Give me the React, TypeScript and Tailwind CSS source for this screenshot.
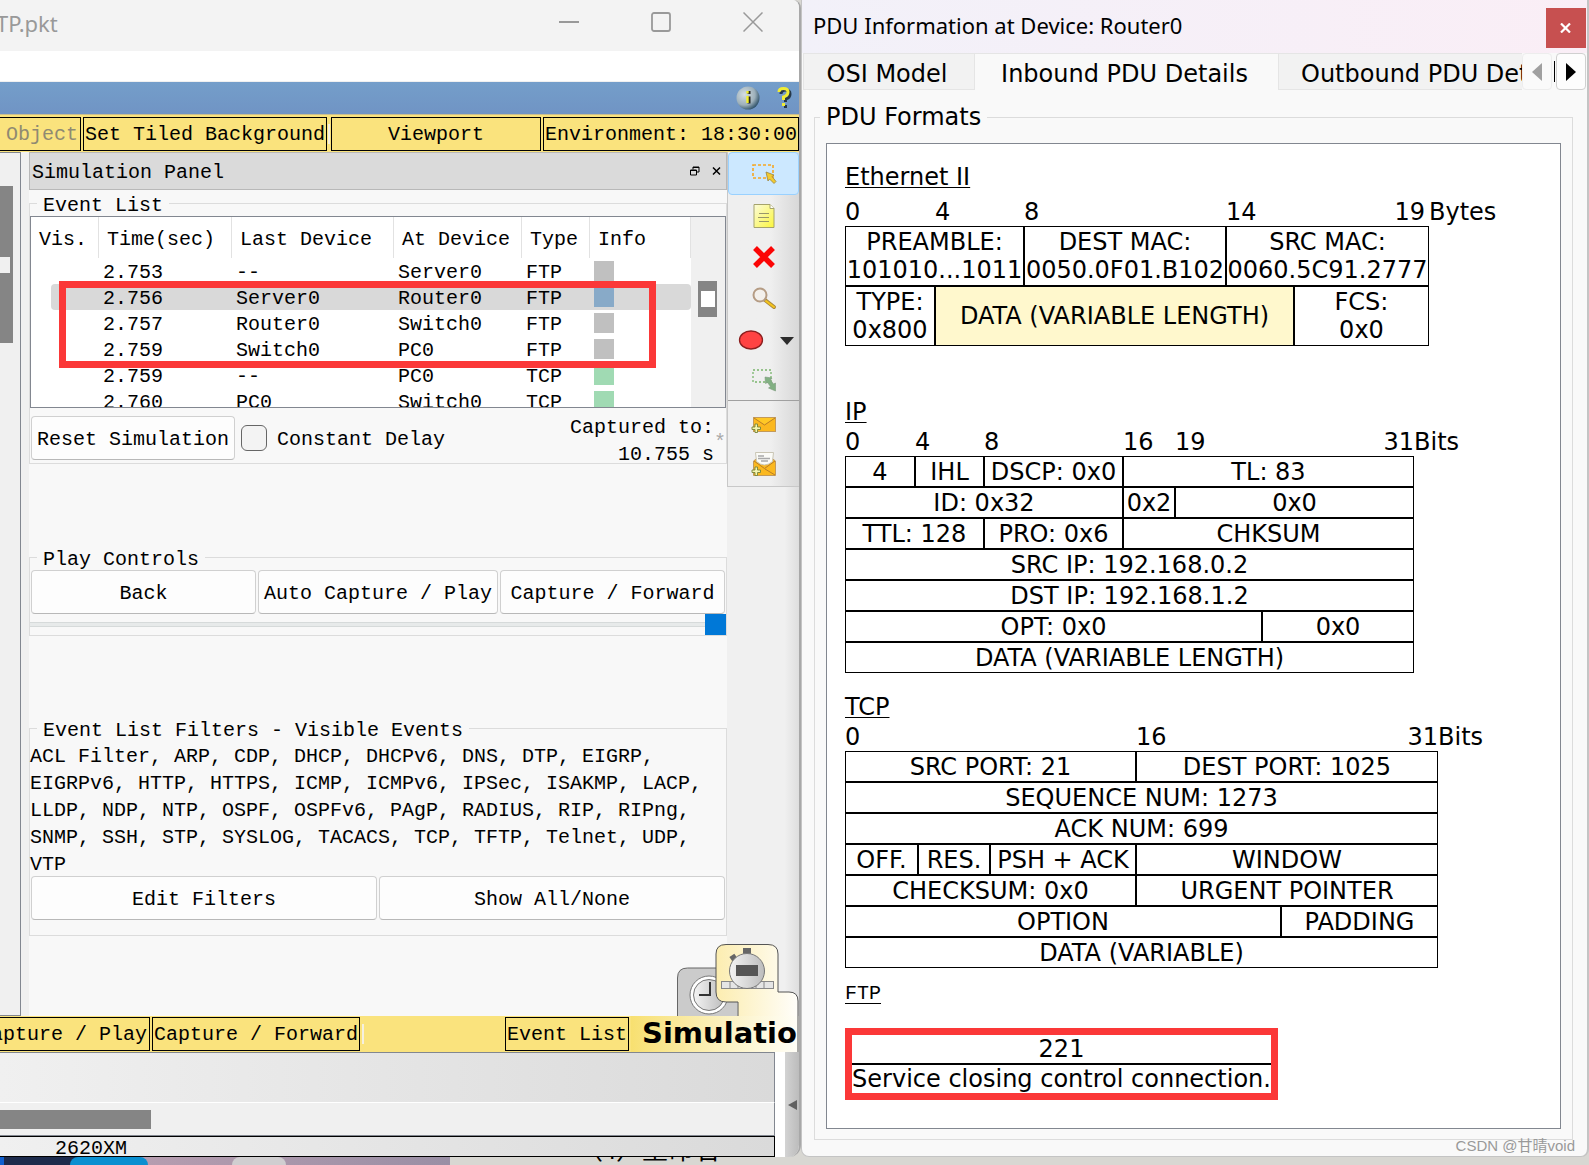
import type { ReactNode } from 'react';
import { clsx } from 'clsx';

const mono = "font-['Liberation_Mono',monospace]";
const sans = "font-['DejaVu_Sans',sans-serif]";

interface SimEvent {
  time: string;
  last: string;
  at: string;
  type: string;
  color: string;
  selected?: boolean;
}

const events: SimEvent[] = [
  { time: '2.753', last: '--', at: 'Server0', type: 'FTP', color: 'bg-[#c0c0c0]' },
  { time: '2.756', last: 'Server0', at: 'Router0', type: 'FTP', color: 'bg-[#88aac8]', selected: true },
  { time: '2.757', last: 'Router0', at: 'Switch0', type: 'FTP', color: 'bg-[#c0c0c0]' },
  { time: '2.759', last: 'Switch0', at: 'PC0', type: 'FTP', color: 'bg-[#c0c0c0]' },
  { time: '2.759', last: '--', at: 'PC0', type: 'TCP', color: 'bg-[#a0dab3]' },
  { time: '2.760', last: 'PC0', at: 'Switch0', type: 'TCP', color: 'bg-[#a0dab3]' },
];

const filters =
  'ACL Filter, ARP, CDP, DHCP, DHCPv6, DNS, DTP, EIGRP, EIGRPv6, HTTP, HTTPS, ICMP, ICMPv6, IPSec, ISAKMP, LACP, LLDP, NDP, NTP, OSPF, OSPFv6, PAgP, RADIUS, RIP, RIPng, SNMP, SSH, STP, SYSLOG, TACACS, TCP, TFTP, Telnet, UDP, VTP';

interface Cell {
  text: string;
  span: number;
  fill?: boolean;
}

interface PduFormat {
  name: string;
  unit: string;
  cols: number[];
  marks: string[];
  rows: Cell[][];
}

const ethernet: PduFormat = {
  name: 'Ethernet II',
  unit: 'Bytes',
  cols: [90, 89, 202, 68, 135],
  marks: ['0', '4', '8', '14', '19'],
  rows: [
    [
      { text: 'PREAMBLE:\n101010...1011', span: 2 },
      { text: 'DEST MAC:\n0050.0F01.B102', span: 1 },
      { text: 'SRC MAC:\n0060.5C91.2777', span: 2 },
    ],
    [
      { text: 'TYPE:\n0x800', span: 1 },
      { text: 'DATA (VARIABLE LENGTH)', span: 3, fill: true },
      { text: 'FCS:\n0x0', span: 1 },
    ],
  ],
};

const ip: PduFormat = {
  name: 'IP',
  unit: 'Bits',
  cols: [70, 69, 139, 52, 87, 152],
  marks: ['0', '4', '8', '16', '19', '31'],
  rows: [
    [{ text: '4', span: 1 }, { text: 'IHL', span: 1 }, { text: 'DSCP: 0x0', span: 1 }, { text: 'TL: 83', span: 3 }],
    [{ text: 'ID: 0x32', span: 3 }, { text: '0x2', span: 1 }, { text: '0x0', span: 2 }],
    [{ text: 'TTL: 128', span: 2 }, { text: 'PRO: 0x6', span: 1 }, { text: 'CHKSUM', span: 3 }],
    [{ text: 'SRC IP: 192.168.0.2', span: 6 }],
    [{ text: 'DST IP: 192.168.1.2', span: 6 }],
    [{ text: 'OPT: 0x0', span: 5 }, { text: '0x0', span: 1 }],
    [{ text: 'DATA (VARIABLE LENGTH)', span: 6 }],
  ],
};

const tcp: PduFormat = {
  name: 'TCP',
  unit: 'Bits',
  cols: [73, 72, 146, 145, 157],
  marks: ['0', '', '', '16', '31'],
  rows: [
    [{ text: 'SRC PORT: 21', span: 3 }, { text: 'DEST PORT: 1025', span: 2 }],
    [{ text: 'SEQUENCE NUM: 1273', span: 5 }],
    [{ text: 'ACK NUM: 699', span: 5 }],
    [{ text: 'OFF.', span: 1 }, { text: 'RES.', span: 1 }, { text: 'PSH + ACK', span: 1 }, { text: 'WINDOW', span: 2 }],
    [{ text: 'CHECKSUM: 0x0', span: 3 }, { text: 'URGENT POINTER', span: 2 }],
    [{ text: 'OPTION', span: 4 }, { text: 'PADDING', span: 1 }],
    [{ text: 'DATA (VARIABLE)', span: 5 }],
  ],
};

const PduTable = ({ pdu, tall }: { pdu: PduFormat; tall?: boolean }) => (
  <section>
    <h3 className="underline underline-offset-2 decoration-1 leading-7">{pdu.name}</h3>
    <table className="table-fixed w-0 border-separate border-spacing-0 whitespace-pre leading-7">
      <colgroup>
        {pdu.cols.map((w, i) => (
          <col key={i} style={{ width: w }} />
        ))}
        <col className="w-[72px]" />
      </colgroup>
      <thead>
        <tr className={tall ? 'h-[35px]' : 'h-[30px]'}>
          {pdu.marks.map((m, i) => (
            <th
              key={i}
              className={clsx(
                'p-0 font-normal align-bottom',
                i === pdu.marks.length - 1 ? 'text-right' : 'text-left',
                tall && i === pdu.marks.length - 1 && 'pr-1',
              )}
            >
              {m}
            </th>
          ))}
          <th className="p-0 font-normal text-left align-bottom">{pdu.unit}</th>
        </tr>
      </thead>
      <tbody>
        {pdu.rows.map((row, r) => (
          <tr key={r} className={tall ? 'h-[60px]' : 'h-[31px]'}>
            {row.map((cell, c) => (
              <td
                key={c}
                colSpan={cell.span}
                className={clsx('p-0 border border-black text-center', cell.fill && 'bg-[#fff8cd]')}
              >
                <div className="flex justify-center">{cell.text}</div>
              </td>
            ))}
          </tr>
        ))}
      </tbody>
    </table>
  </section>
);

const Group = ({ title, className, children }: { title: string; className?: string; children: ReactNode }) => (
  <fieldset className={clsx('min-w-0 border border-[#dcdcdc]', className)}>
    <legend className="ml-[7px] px-1.5 h-[26px] leading-8">{title}</legend>
    {children}
  </fieldset>
);

const PushButton = ({ className, children }: { className?: string; children: ReactNode }) => (
  <button
    type="button"
    className={clsx(
      'h-11 rounded border border-[#d0d0d0] border-b-[#b8b8b8] bg-[#fdfdfd] pt-1 whitespace-nowrap',
      className,
    )}
  >
    {children}
  </button>
);

const BarButton = ({ className, children }: { className?: string; children: ReactNode }) => (
  <button type="button" className={clsx('h-[34px] shrink-0 border border-black pt-0.5 whitespace-nowrap', className)}>
    {children}
  </button>
);

const SelectIcon = () => (
  <svg width="26" height="22" viewBox="0 0 26 22">
    <rect x="2" y="2" width="20" height="13" fill="none" stroke="#f5a623" strokeWidth="1.6" strokeDasharray="3 2" />
    <path d="M15 9l8 3-2 1.500 4 5-2 2-4.500-4.500-1.500 2z" fill="#f2cb30" stroke="#9b8440" strokeWidth="0.8" />
  </svg>
);

const NoteIcon = () => (
  <svg width="22" height="26" viewBox="0 0 22 26">
    <defs>
      <linearGradient id="note" x1="0" y1="0" x2="1" y2="1">
        <stop offset="0" stopColor="#fbfbdc" />
        <stop offset="1" stopColor="#fbf63c" />
      </linearGradient>
    </defs>
    <path d="M1 1.500h16l4 4v19H1z" fill="url(#note)" stroke="#a5a36c" />
    <path d="M17 1.500v4h4" fill="#fff" stroke="#a5a36c" />
    <path d="M6 10.500h10M5 14.500h11M6 18.500h10" stroke="#99976a" />
  </svg>
);

const DeleteIcon = () => (
  <svg width="24" height="24" viewBox="0 0 24 24">
    <path d="M3 3l18 18M21 3L3 21" stroke="#fb0505" strokeWidth="5.500" />
  </svg>
);

const InspectIcon = () => (
  <svg width="26" height="24" viewBox="0 0 26 24">
    <path d="M14 14l9 7" stroke="#ab8a40" strokeWidth="4" strokeLinecap="round" />
    <path d="M15 15l8 6" stroke="#f5c51c" strokeWidth="2" strokeLinecap="round" />
    <circle cx="9" cy="9" r="6.500" fill="#f3f0ec" stroke="#b59c84" strokeWidth="2" />
  </svg>
);

const EllipseIcon = () => (
  <svg width="60" height="22" viewBox="0 0 60 22">
    <ellipse cx="17" cy="12" rx="11.500" ry="9" fill="#ff4343" stroke="#8c1f1f" strokeWidth="1.300" />
    <path d="M46 9h14l-7 8z" fill="#2d2d2d" />
  </svg>
);

const ResizeIcon = () => (
  <svg width="26" height="24" viewBox="0 0 26 24">
    <rect x="2" y="2" width="18" height="12" fill="none" stroke="#79b56c" strokeWidth="1.300" strokeDasharray="2 2" />
    <path d="M14 9l7 1-1.500 2 3 4 2-1v8l-7-3 2-1.500-3-4-2 1z" fill="#82b083" stroke="#7c9a7c" strokeWidth="0.600" />
  </svg>
);

const Plus = () => (
  <path d="M2 12h3V9h2.500v3h3v2.500h-3v3H5v-3H2z" fill="#f4f5b0" stroke="#76853a" strokeWidth="0.900" />
);

const MailIcon = () => (
  <svg width="28" height="20" viewBox="0 0 28 20">
    <rect x="3.500" y="2.500" width="22" height="14" fill="#fbb81f" stroke="#c39a5a" />
    <path d="M4 3l10.500 7L25 3" fill="#ffc825" stroke="#b97d28" />
    <Plus />
  </svg>
);

const OpenMailIcon = () => (
  <svg width="28" height="28" viewBox="0 0 28 28">
    <path d="M3.500 10l4-3h14l4 3v14.500h-22z" fill="#fbb81f" stroke="#c39a5a" />
    <path d="M25 10l-10.500 7.500L4 10M15 18l10 6" fill="none" stroke="#b97d28" />
    <path d="M5.500 1.500h18l-1 9q-8 7-16 0z" fill="#fbfbf7" stroke="#c9c5b4" />
    <path d="M8 5h6M8 7.500h12M11 10h7" stroke="#a9a9a9" strokeWidth="1.500" />
    <g transform="translate(0 7)">
      <Plus />
    </g>
  </svg>
);

const ModeTabs = () => (
  <svg className="absolute right-0 bottom-0 pointer-events-none" width="122" height="109" viewBox="1 0 122 109">
    <defs>
      <linearGradient id="tab" x1="0" y1="0" x2="1" y2="0">
        <stop offset="0" stopColor="#fcedb0" />
        <stop offset="1" stopColor="#fffefa" />
      </linearGradient>
      <linearGradient id="dial" x1="0" y1="0" x2="1" y2="0">
        <stop offset="0" stopColor="#f4f4f4" />
        <stop offset="1" stopColor="#bcbcbc" />
      </linearGradient>
    </defs>
    <path d="M1.500 73V35q0-10 10-10h50v48z" fill="#cbcbcb" />
    <path d="M1.500 73V35q0-10 10-10h50" fill="none" stroke="#666" />
    <circle cx="33" cy="52" r="19" fill="#fff" stroke="#777" />
    <circle cx="33" cy="52" r="15.500" fill="url(#dial)" stroke="#777" />
    <path d="M34 39v13H23" fill="none" stroke="#333" strokeWidth="2" />
    <path d="M40 11q0-10 10-10h42q10 0 10 10v38h11q9 0 9 9v15H62V59H50q-10 0-10-10z" fill="url(#tab)" />
    <path
      d="M62 73V59H50q-10 0-10-10V11Q40 1.500 50 1.500h42q10 0 10 9.500v38h11q9 0 9 9v52"
      fill="none"
      stroke="#555"
    />
    <rect x="45.500" y="38.500" width="52" height="7" fill="#e5e5e5" stroke="#888" />
    <path d="M54 38v8M62 38v8M80 38v8M88 38v8" stroke="#888" />
    <rect x="67" y="5" width="8" height="6" fill="#666" />
    <rect x="54" y="12" width="6" height="5" fill="#666" transform="rotate(-35 57 14)" />
    <circle cx="71" cy="28" r="17.500" fill="url(#dial)" stroke="#777" />
    <rect x="60" y="22" width="22" height="11" fill="#555" />
  </svg>
);

const tools = [
  { label: 'Select', icon: <SelectIcon />, active: true },
  { label: 'Place Note', icon: <NoteIcon /> },
  { label: 'Delete', icon: <DeleteIcon /> },
  { label: 'Inspect', icon: <InspectIcon /> },
  { label: 'Draw Ellipse', icon: <EllipseIcon /> },
  { label: 'Resize Shape', icon: <ResizeIcon /> },
];

const EventCell = ({ selected, children }: { selected?: boolean; children: ReactNode }) => (
  <td className="p-0">
    <div className={clsx('h-[26px] pl-1 leading-[30px]', selected && 'bg-[#d9d9d9]')}>{children}</div>
  </td>
);

const EventTable = () => (
  <div className="relative flex h-48 border border-[#828790] bg-white">
    <div className="flex-1 overflow-hidden">
      <table className="w-full table-fixed border-separate border-spacing-0 text-left">
        <colgroup>
          <col className="w-[68px]" />
          <col className="w-[133px]" />
          <col className="w-[162px]" />
          <col className="w-[128px]" />
          <col className="w-[68px]" />
          <col />
        </colgroup>
        <thead>
          <tr className="h-[41px]">
            {['Vis.', 'Time(sec)', 'Last Device', 'At Device', 'Type', 'Info'].map((h) => (
              <th key={h} className="p-0 pl-2 pt-1 font-normal border-r border-[#e2e2e2] whitespace-nowrap">
                {h}
              </th>
            ))}
          </tr>
        </thead>
        <tbody>
          {events.map((e, i) => (
            <tr key={i}>
              <td className="p-0">
                <div className={clsx('ml-5 h-[26px] rounded-l', e.selected && 'bg-[#d9d9d9]')} />
              </td>
              <EventCell selected={e.selected}>{e.time}</EventCell>
              <EventCell selected={e.selected}>{e.last}</EventCell>
              <EventCell selected={e.selected}>{e.at}</EventCell>
              <EventCell selected={e.selected}>{e.type}</EventCell>
              <td className="p-0">
                <div className={clsx('flex h-[26px] items-center rounded-r pl-1', e.selected && 'bg-[#d9d9d9]')}>
                  <div className={clsx('size-5', e.color)} />
                </div>
              </td>
            </tr>
          ))}
        </tbody>
      </table>
    </div>
    <div className="w-[34px] bg-[#f0f0f0] pt-16 pl-[7px]">
      <div className="flex h-9 w-[19px] items-center justify-center bg-[#858585]">
        <div className="h-4 w-3.5 bg-white" />
      </div>
    </div>
    {/* marks the three FTP hops */}
    <div className="absolute left-7 right-[69px] top-16 h-[87px] border-[7px] border-[#fb3838]" />
  </div>
);

const SimulationPanel = () => (
  <div className="flex-1 min-w-0 bg-[#f8f8f8]">
    <div className="flex h-[38px] items-center justify-between border border-[#b8b8b8] bg-[#dadada] pl-0.5 pr-1">
      <span className="pt-1">Simulation Panel</span>
      <div className="flex gap-3">
        <button type="button" aria-label="Float">
          <svg width="10" height="10" viewBox="0 0 10 10" fill="none" stroke="#000">
            <path d="M3 3.500V1h6v5H6.500M3 1.500h6" />
            <path d="M.5 4h6v5h-6zM.5 4.500h6" />
          </svg>
        </button>
        <button type="button" aria-label="Close panel">
          <svg width="10" height="10" viewBox="0 0 10 10" stroke="#000" strokeWidth="1.500">
            <path d="M1 1.500l7 7M8 1.500l-7 7" />
          </svg>
        </button>
      </div>
    </div>

    <Group title="Event List">
      <EventTable />
      <div className="flex h-[55px] items-start pt-2 pl-px">
        <PushButton className="w-[204px] shrink-0">Reset Simulation</PushButton>
        <label className="ml-1.5 flex h-11 items-center gap-2.5 whitespace-nowrap">
          <input
            type="checkbox"
            className="size-[26px] appearance-none rounded-md border border-[#666] bg-[#f3f3f3]"
          />
          <span className="pt-1">Constant Delay</span>
        </label>
        <p className="-mt-0.5 ml-auto text-right leading-[27px] whitespace-nowrap">
          Captured to:
          <br />
          10.755 s
        </p>
        <span className="w-3 pt-3 text-[#a9a9a9]">*</span>
      </div>
    </Group>

    <Group title="Play Controls" className="mt-20">
      <div className="flex gap-0.5 px-px">
        <PushButton className="flex-1">Back</PushButton>
        <PushButton className="w-[240px]">Auto Capture / Play</PushButton>
        <PushButton className="flex-1">Capture / Forward</PushButton>
      </div>
      <input
        type="range"
        aria-label="Play speed"
        defaultValue={100}
        className="my-2 block h-[5px] w-full appearance-none border-y border-[#d6dada] bg-[#e7eaea] [&::-webkit-slider-thumb]:size-[21px] [&::-webkit-slider-thumb]:appearance-none [&::-webkit-slider-thumb]:bg-[#0078d7]"
      />
    </Group>

    <Group title="Event List Filters - Visible Events" className="mt-[79px]">
      <p className="-mb-0.5 pt-0.5 pr-5 leading-[27px]">{filters}</p>
      <div className="flex gap-0.5 px-px pb-[15px]">
        <PushButton className="flex-1">Edit Filters</PushButton>
        <PushButton className="flex-1">Show All/None</PushButton>
      </div>
    </Group>
  </div>
);

const ToolColumn = () => (
  <div className="w-[72px] bg-linear-to-r from-[#f0f0f0] from-80% to-[#dedede]">
    <div className="border-b border-l border-[#c8c8c8] bg-linear-to-r from-[#efefef] from-60% to-[#d8d8d8]">
      <div className="flex h-[249px] flex-col border-b border-[#a0a0a0]">
        {tools.map((t) => (
          <button
            key={t.label}
            type="button"
            aria-label={t.label}
            className={clsx(
              'flex flex-1 items-center justify-center',
              t.active && 'rounded border border-[#99d1ff] bg-[#cce8ff]',
            )}
          >
            {t.icon}
          </button>
        ))}
      </div>
      <button type="button" aria-label="Add Simple PDU" className="flex h-12 w-full items-center justify-center">
        <MailIcon />
      </button>
      <button type="button" aria-label="Add Complex PDU" className="flex h-[37px] w-full items-start justify-center pt-0.5">
        <OpenMailIcon />
      </button>
    </div>
  </div>
);

const MainWindow = () => (
  <div
    className={clsx(
      'flex min-w-0 flex-col overflow-hidden rounded-tr-lg rounded-br-xl border-r-2 border-[#a8a8a8] bg-[#f0f0f0] text-[20px]',
      mono,
    )}
  >
    <div className="flex h-[51px] bg-[#f3f3f3] text-[#999]">
      <span className="-ml-1 flex-1 font-['Noto_Sans',sans-serif] text-[22px] leading-[46px]">TP.pkt</span>
      <button type="button" aria-label="Minimize" className="flex h-11 w-[92px] items-center justify-center">
        <svg width="20" height="20" viewBox="0 0 20 20" stroke="currentColor" strokeWidth="2">
          <path d="M0 10h20" />
        </svg>
      </button>
      <button type="button" aria-label="Maximize" className="flex h-11 w-[92px] items-center justify-center">
        <svg width="20" height="20" viewBox="0 0 20 20" fill="none" stroke="currentColor" strokeWidth="1.800">
          <rect x="1" y="1" width="18" height="18" rx="2" />
        </svg>
      </button>
      <button type="button" aria-label="Close" className="flex h-11 w-[92px] items-center justify-center">
        <svg width="20" height="20" viewBox="0 0 20 20" stroke="currentColor" strokeWidth="1.500">
          <path d="M.5.5l19 19M19.500.5l-19 19" />
        </svg>
      </button>
    </div>
    <div className="h-[31px] border-b border-[#f0f0f0] bg-white" />

    <div className="flex h-8 items-center justify-end gap-[17px] bg-linear-to-b from-[#749eca] to-[#7094c4] pr-1.5">
      <button type="button" aria-label="Info">
        <svg width="24" height="24" viewBox="0 0 24 24">
          <defs>
            <radialGradient id="ball" cx="0.350" cy="0.350" r="0.700">
              <stop offset="0" stopColor="#d5dee2" />
              <stop offset="0.650" stopColor="#9db0ba" />
              <stop offset="1" stopColor="#30536b" />
            </radialGradient>
          </defs>
          <circle cx="12" cy="12" r="11.500" fill="url(#ball)" />
          <path d="M13 5v3M13 10.500v7" stroke="#222" strokeWidth="3" />
          <path d="M11.500 5v2.500M11.500 10v7" stroke="#f2ee2c" strokeWidth="2.400" />
        </svg>
      </button>
      <button type="button" aria-label="Help">
        <svg width="16" height="22" viewBox="0 0 16 22" fill="none" strokeWidth="3">
          <path d="M4 7q0-4 4.500-4T13 7t-4.500 5v3M8.500 18v3" stroke="#26384a" />
          <path d="M2 5q0-3.500 4.500-3.500T11 5t-4.500 5v3M6.500 16v3" stroke="#f0ec36" />
        </svg>
      </button>
    </div>

    <div className="flex h-[38px] items-center gap-0.5 border-t border-[#c9bf92] bg-[#fae37d]">
      <BarButton className="w-[81px] overflow-hidden border-l-0 pl-1.5 text-left text-[#8f8a72]">Object</BarButton>
      <BarButton className="w-[244px]">Set Tiled Background</BarButton>
      <span className="-mx-px h-5 w-0.5 shrink-0 bg-[#f5f0e0]" />
      <BarButton className="w-[210px]">Viewport</BarButton>
      <BarButton className="min-w-[255px] flex-1">Environment: 18:30:00</BarButton>
    </div>

    <div className="relative flex h-[864px]">
      <div className="w-[21px] border-t border-r border-b border-[#828790] pt-[33px]">
        <div className="flex h-[157px] w-[13px] items-center bg-[#858585]">
          <div className="h-4 w-2.5 bg-[#f0f0f0]" />
        </div>
      </div>
      <div className="w-2" />
      <SimulationPanel />
      <ToolColumn />
    </div>

    <div className="relative flex h-9 items-center gap-0.5 bg-[#fae37d]">
      <ModeTabs />
      <BarButton className="flex w-[150px] items-center justify-end overflow-hidden border-l-0 pr-0.5">
        Auto Capture / Play
      </BarButton>
      <BarButton className="w-[208px]">Capture / Forward</BarButton>
      <span className="h-5 w-0.5 bg-[#f5f0e0]" />
      <span className="flex-1" />
      <BarButton className="w-[124px]">Event List</BarButton>
      <div className="flex h-9 w-[168px] items-center overflow-hidden bg-linear-to-r from-[#f8e070] to-[#fffef8] pl-[11px]">
        <span className={clsx('relative text-[29px] font-bold', sans)}>Simulatio</span>
      </div>
    </div>

    <div className="flex flex-1">
      <div className="flex flex-1 flex-col">
        <div className="h-[50px] border-t border-r border-[#828790] bg-linear-to-r from-[#f0f0f0] to-[#dadada]" />
        <div className="flex h-[34px] items-center border-t border-r border-b border-t-white border-r-[#828790] border-b-[#828790] bg-[#f0f0f0]">
          <div className="h-[19px] w-[151px] bg-[#858585]" />
        </div>
        <div className="h-[21px] border border-l-0 border-black bg-linear-to-r from-[#f0f0f0] to-[#dadada] pl-[55px] leading-6">
          2620XM
        </div>
      </div>
      <div className="w-2.5 bg-white" />
      <button
        type="button"
        aria-label="Expand"
        className="flex w-3.5 items-center justify-center bg-linear-to-r from-[#d3d3d3] to-[#bcbcbc]"
      >
        <svg width="9" height="10" viewBox="0 0 9 10">
          <path d="M9 0v10L0 5z" fill="#606060" />
        </svg>
      </button>
    </div>
  </div>
);

const PduWindow = () => (
  <div
    className={clsx(
      'relative flex min-w-0 flex-col overflow-hidden rounded-b-lg border-r-2 border-b border-l border-[#c4c4c4] bg-[#f9f9f9] text-[24px]',
      sans,
    )}
  >
    <div className="flex h-[53px] justify-between bg-linear-to-r from-[#f2f1f9] to-[#faeef6] pl-[11px] pr-px">
      <h2 className="font-['Noto_Sans',sans-serif] text-[22px] leading-[50px]">PDU Information at Device: Router0</h2>
      <button type="button" aria-label="Close" className="mt-2 flex size-10 items-center justify-center bg-[#c75050]">
        <svg width="12" height="10" viewBox="0 0 12 10" stroke="#fff" strokeWidth="2.200">
          <path d="M1 .5l9 9M10 .5l-9 9" />
        </svg>
      </button>
    </div>

    <div role="tablist" className="flex h-[37px] border-[#e5e5e5] pl-px pr-px whitespace-nowrap">
      <button type="button" role="tab" className="w-[172px] shrink-0 border border-[#e5e5e5] bg-[#f2f2f2] pt-0.5 pr-1">
        OSI Model
      </button>
      <button
        type="button"
        role="tab"
        aria-selected
        className="w-[303px] shrink-0 border-t border-[#e5e5e5] pt-0.5 pr-1"
      >
        Inbound PDU Details
      </button>
      <button
        type="button"
        role="tab"
        className="min-w-0 flex-1 overflow-hidden border border-r-0 border-[#e5e5e5] bg-[#f2f2f2] pt-0.5 pl-[22px] text-left"
      >
        Outbound PDU Details
      </button>
      <button
        type="button"
        aria-label="Scroll left"
        className="flex w-[30px] items-center justify-center rounded border border-[#ededed] bg-[#fafafa]"
      >
        <svg width="10" height="18" viewBox="0 0 10 18">
          <path d="M10 0v18L0 9z" fill="#a0a0a0" />
        </svg>
      </button>
      <span className="my-2 mx-px w-0.5 border-r border-black" />
      <button
        type="button"
        aria-label="Scroll right"
        className="flex w-[30px] items-center justify-center rounded border border-[#d0d0d0] bg-[#fdfdfd]"
      >
        <svg width="10" height="18" viewBox="0 0 10 18">
          <path d="M0 0v18l10-9z" fill="#000" />
        </svg>
      </button>
    </div>

    <fieldset className="mt-[13px] mr-3.5 mb-4 ml-3 flex min-w-0 flex-1 flex-col border border-[#dcdcdc] px-[11px] pb-2.5">
      <legend className="-ml-1.5 px-1.5 leading-7">PDU Formats</legend>
      <div className="mt-3 flex-1 border border-[#828790] bg-white pl-[18px] pt-[19px]">
        <PduTable pdu={ethernet} tall />
        <div className="h-[52px]" />
        <PduTable pdu={ip} />
        <div className="h-5" />
        <PduTable pdu={tcp} />
        <h3 className={clsx('mt-3 text-[20px] leading-7 underline underline-offset-4 decoration-1', mono)}>FTP</h3>
        <table className="mt-5 w-[433px] border-[7px] border-[#fb3838] text-center leading-7 whitespace-nowrap">
          <tbody>
            <tr className="h-[30px]">
              <td className="border-b-2 border-black p-0">221</td>
            </tr>
            <tr className="h-[29px]">
              <td className="p-0">Service closing control connection.</td>
            </tr>
          </tbody>
        </table>
      </div>
    </fieldset>
    <span className="absolute right-3 bottom-0 font-['Liberation_Sans','Noto_Sans_CJK_SC',sans-serif] text-[15px] leading-5 text-[#999]">
      CSDN @甘晴void
    </span>
  </div>
);

export default function App() {
  return (
    <div className="flex min-h-screen flex-col overflow-hidden bg-[#d8d7d2] text-black">
      <div className="grid flex-1 grid-cols-[801fr_788fr]">
        <MainWindow />
        <PduWindow />
      </div>
      {/* strip of the desktop under both windows */}
      <div className="flex h-2 overflow-hidden">
        <div className="flex w-[450px] bg-linear-to-r from-[#1d2b4c] from-20% via-[#b79db0] via-30% to-[#9a8fa5]">
          <div className="h-2 w-1 bg-[#1060d0]" />
          <div className="ml-[66px] h-2 w-[78px] rounded-t-full bg-[#0a8fd0]" />
          <div className="ml-[84px] h-2 w-[54px] rounded-t-full bg-[#d0ced0]" />
        </div>
        <div className="flex flex-1 items-end pl-[127px] font-['Liberation_Serif','Noto_Sans_CJK_SC',serif] text-[26px] leading-7">
          <span>（4）重命名</span>
        </div>
      </div>
    </div>
  );
}
